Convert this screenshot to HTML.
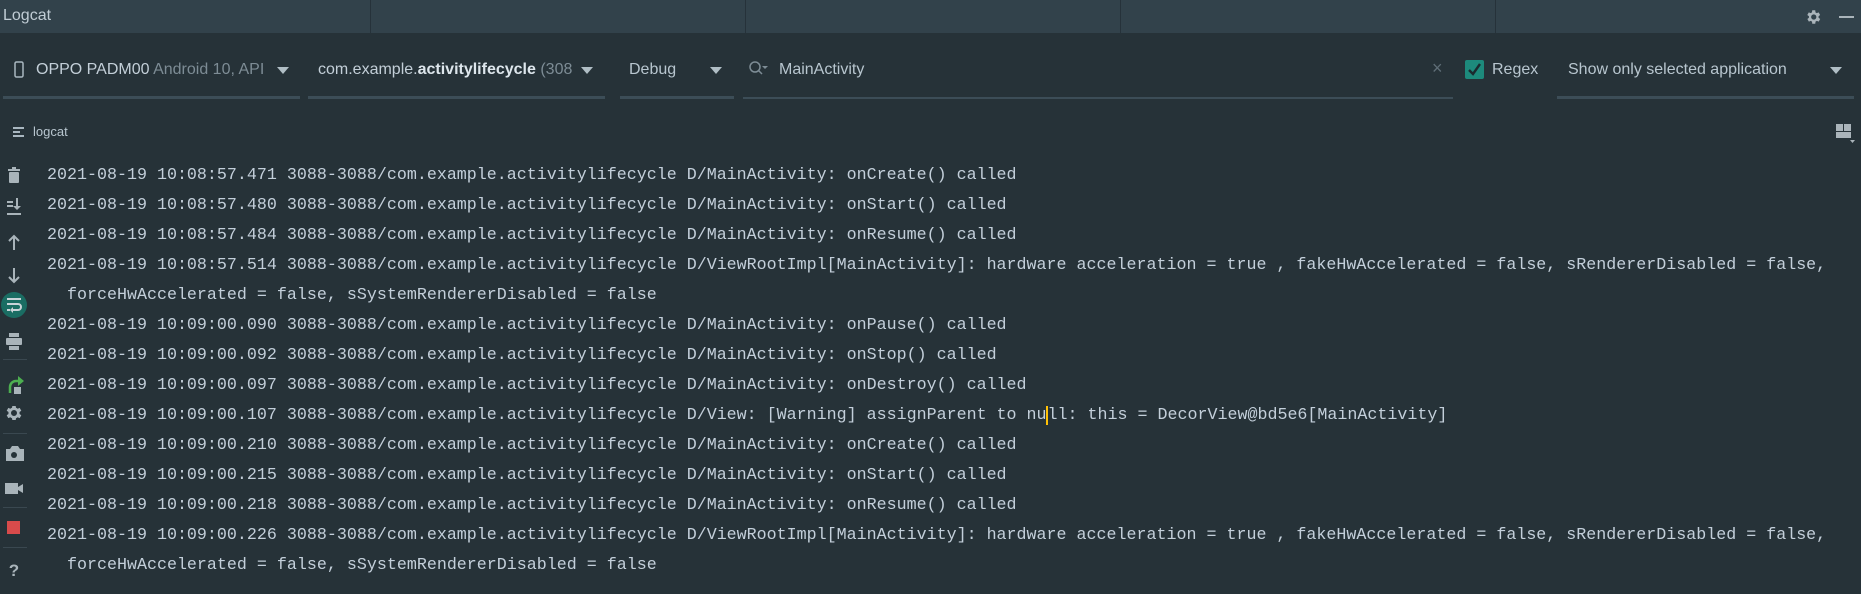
<!DOCTYPE html>
<html><head><meta charset="utf-8"><style>
*{margin:0;padding:0;box-sizing:border-box}
body{width:1861px;height:594px;background:#263238;overflow:hidden;position:relative;font-family:"Liberation Sans",sans-serif;color:#b0bec5}
.abs{position:absolute}
.title{left:0;top:0;width:1861px;height:33px;background:#32424b}
.tdiv{top:0;width:1px;height:33px;background:#26323a}
.ui{font-size:16px;color:#a9b7c0;white-space:nowrap}
.ul{height:3px;background:#3c4d57;top:96px}
.log{left:47px;top:161px;font-family:"Liberation Mono",monospace;font-size:16.67px;line-height:30px;color:#c3cfda;white-space:pre}
.arr{width:0;height:0;border-left:6px solid transparent;border-right:6px solid transparent;border-top:7px solid #b0bec5}
</style></head><body>
<div class="abs title"></div>
<div class="abs ui" style="left:3px;top:7px;color:#c0ccd4;font-size:16px">Logcat</div>
<div class="abs tdiv" style="left:370px"></div>
<div class="abs tdiv" style="left:745px"></div>
<div class="abs tdiv" style="left:1120px"></div>
<div class="abs tdiv" style="left:1495px"></div>
<svg class="abs" style="left:1804px;top:8px" width="18" height="18" viewBox="0 0 24 24"><path fill="#aab4ba" d="M19.4 13a7.5 7.5 0 000-2l2.1-1.6-2-3.5-2.5 1a7 7 0 00-1.7-1L15 3h-4l-.4 2.9a7 7 0 00-1.7 1l-2.5-1-2 3.5L6.6 11a7.5 7.5 0 000 2l-2.1 1.6 2 3.5 2.5-1a7 7 0 001.7 1L11 21h4l.4-2.9a7 7 0 001.7-1l2.5 1 2-3.5zM13 15.5a3.5 3.5 0 110-7 3.5 3.5 0 010 7z"/></svg>
<div class="abs" style="left:1839px;top:16px;width:15px;height:2px;background:#aab4ba"></div>

<svg class="abs" style="left:14px;top:61px" width="10" height="17"><rect x="1" y="1" width="8" height="15" rx="1.5" fill="none" stroke="#a9b7c0" stroke-width="1.5"/></svg>
<div class="abs ui" style="left:36px;top:61px"><span style="color:#c3cfd8">OPPO PADM00</span> <span style="color:#7d8c95">Android 10, API</span></div>
<div class="abs arr" style="left:277px;top:67px"></div>
<div class="abs ul" style="left:3px;width:297px"></div>
<div class="abs ui" style="left:318px;top:61px;color:#c3cfd8">com.example.<b style="color:#dde6ec">activitylifecycle</b> <span style="color:#7d8c95">(308</span></div>
<div class="abs arr" style="left:581px;top:67px"></div>
<div class="abs ul" style="left:308px;width:297px"></div>
<div class="abs ui" style="left:629px;top:61px;color:#b8c6cf">Debug</div>
<div class="abs arr" style="left:710px;top:67px"></div>
<div class="abs ul" style="left:620px;width:114px"></div>
<svg class="abs" style="left:748px;top:60px" width="22" height="18"><circle cx="7" cy="7" r="5" fill="none" stroke="#7d8c95" stroke-width="1.5"/><line x1="10.5" y1="10.5" x2="14" y2="14" stroke="#7d8c95" stroke-width="1.5"/><path d="M14 6h6l-3 3z" fill="#7d8c95"/></svg>
<div class="abs ui" style="left:779px;top:61px;color:#b8c6cf">MainActivity</div>
<div class="abs" style="left:743px;top:97px;width:710px;height:2px;background:#3c4d57"></div>
<div class="abs ui" style="left:1432px;top:58px;color:#5f6e77;font-size:18px">×</div>
<svg class="abs" style="left:1465px;top:60px" width="19" height="19"><rect width="19" height="19" rx="2" fill="#1d8a7c"/><path d="M4 10l4 4 7-10" fill="none" stroke="#1b2a2f" stroke-width="2.4"/></svg>
<div class="abs ui" style="left:1492px;top:61px;color:#b8c6cf">Regex</div>
<div class="abs ui" style="left:1568px;top:61px;color:#b8c6cf">Show only selected application</div>
<div class="abs arr" style="left:1830px;top:67px"></div>
<div class="abs ul" style="left:1557px;width:297px"></div>

<svg class="abs" style="left:13px;top:127px" width="12" height="11"><rect y="0" width="11" height="2" fill="#a9b7c0"/><rect y="4" width="7" height="2" fill="#a9b7c0"/><rect y="8" width="11" height="2" fill="#a9b7c0"/></svg>
<div class="abs ui" style="left:33px;top:124px;font-size:13px;color:#b8c6cf">logcat</div>
<svg class="abs" style="left:1836px;top:124px" width="20" height="20"><rect x="0" y="0" width="7" height="7" fill="#aab4ba"/><rect x="8" y="0" width="7" height="7" fill="#aab4ba"/><rect x="0" y="8" width="15" height="6" fill="#aab4ba"/><path d="M14 16h5l-2.5 3z" fill="#aab4ba"/></svg>

<svg class="abs" style="left:0;top:160px" width="30" height="434">
<g fill="#a9b4ba" stroke="none">
<rect x="8" y="9" width="12" height="2"/><rect x="12" y="7" width="4" height="2"/><rect x="9" y="12" width="10" height="11" rx="1"/>
<rect x="7" y="41" width="6" height="2"/><rect x="7" y="45" width="6" height="2"/><rect x="7" y="53" width="14" height="2"/>
<path d="M16 38h2v8h3l-4 4-4-4h3z"/>
</g>
<g fill="none" stroke="#a9b4ba" stroke-width="2">
<path d="M14 90V76M9 81l5-5 5 5"/>
<path d="M14 108v14M9 117l5 5 5-5"/>
</g>
<circle cx="14" cy="145" r="13" fill="#1a6d63"/>
<g fill="none" stroke="#c9d3d8" stroke-width="2"><path d="M7 139h14M7 144h11a3 3 0 010 6h-5M7 150h3"/></g>
<path d="M13 147l-3 3 3 3z" fill="#c9d3d8"/>
<g fill="#a9b4ba"><rect x="9" y="173" width="10" height="4"/><rect x="6" y="178" width="16" height="7" rx="1"/><rect x="9" y="186" width="10" height="4"/></g>
<rect x="3" y="199" width="24" height="1" fill="#3a4850"/>
<path d="M10 233v-6a6 6 0 016-6h3" fill="none" stroke="#4caf50" stroke-width="2.5"/><path d="M18 216l6 5-6 5z" fill="#4caf50"/><rect x="14" y="227" width="7" height="7" fill="#a9b4ba"/>
<path fill="#a9b4ba" d="M20.5 254a6.5 6.5 0 000-2l1.8-1.3-1.6-2.8-2.1.8a6 6 0 00-1.6-1L16.7 246h-3.4l-.3 1.7a6 6 0 00-1.6 1l-2.1-.8-1.6 2.8L9.5 252a6.5 6.5 0 000 2l-1.8 1.3 1.6 2.8 2.1-.8a6 6 0 001.6 1l.3 1.7h3.4l.3-1.7a6 6 0 001.6-1l2.1.8 1.6-2.8zM15 256a3 3 0 110-6 3 3 0 010 6z" transform="translate(-1,0)"/>
<rect x="3" y="273" width="24" height="1" fill="#3a4850"/>
<path fill="#a9b4ba" d="M6 289h4l2-3h6l2 3h4v12H6z"/><circle cx="14" cy="295" r="3" fill="#263238"/>
<path fill="#a9b4ba" d="M5 323h13v11H5zM18 327l5-3v9l-5-3z"/>
<rect x="3" y="347" width="24" height="1" fill="#3a4850"/>
<rect x="7" y="361" width="13" height="13" fill="#d84b4b"/>
<rect x="3" y="387" width="24" height="1" fill="#3a4850"/>
<text x="14" y="416" text-anchor="middle" font-family="Liberation Sans" font-weight="bold" font-size="17" fill="#a9b4ba">?</text>
</svg>

<div class="abs log">2021-08-19 10:08:57.471 3088-3088/com.example.activitylifecycle D/MainActivity: onCreate() called
2021-08-19 10:08:57.480 3088-3088/com.example.activitylifecycle D/MainActivity: onStart() called
2021-08-19 10:08:57.484 3088-3088/com.example.activitylifecycle D/MainActivity: onResume() called
2021-08-19 10:08:57.514 3088-3088/com.example.activitylifecycle D/ViewRootImpl[MainActivity]: hardware acceleration = true , fakeHwAccelerated = false, sRendererDisabled = false,
  forceHwAccelerated = false, sSystemRendererDisabled = false
2021-08-19 10:09:00.090 3088-3088/com.example.activitylifecycle D/MainActivity: onPause() called
2021-08-19 10:09:00.092 3088-3088/com.example.activitylifecycle D/MainActivity: onStop() called
2021-08-19 10:09:00.097 3088-3088/com.example.activitylifecycle D/MainActivity: onDestroy() called
2021-08-19 10:09:00.107 3088-3088/com.example.activitylifecycle D/View: [Warning] assignParent to nu<span style="border-left:2px solid #ffc107;margin-left:-1px">l</span>l: this = DecorView@bd5e6[MainActivity]
2021-08-19 10:09:00.210 3088-3088/com.example.activitylifecycle D/MainActivity: onCreate() called
2021-08-19 10:09:00.215 3088-3088/com.example.activitylifecycle D/MainActivity: onStart() called
2021-08-19 10:09:00.218 3088-3088/com.example.activitylifecycle D/MainActivity: onResume() called
2021-08-19 10:09:00.226 3088-3088/com.example.activitylifecycle D/ViewRootImpl[MainActivity]: hardware acceleration = true , fakeHwAccelerated = false, sRendererDisabled = false,
  forceHwAccelerated = false, sSystemRendererDisabled = false</div>
</body></html>
